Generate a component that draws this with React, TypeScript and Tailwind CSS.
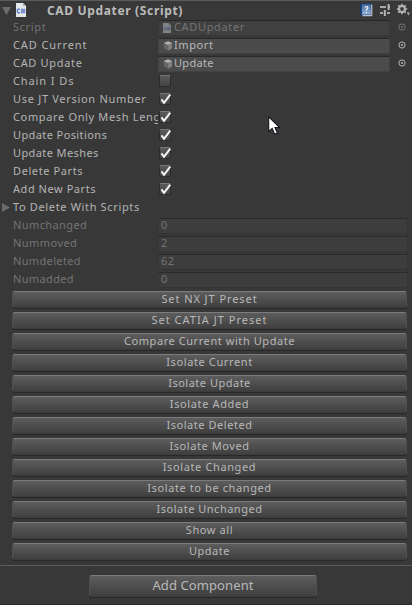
import React from "react";

const fontBase = "font-['Noto_Sans','DejaVu_Sans',sans-serif]";

type Spaced = { text: string; track: string };

function CsIcon({ dim }: { dim?: boolean }) {
  return (
    <svg
      viewBox="0 0 10 14"
      preserveAspectRatio="none"
      className={dim ? "h-[10px] w-[8px] shrink-0 opacity-40" : "h-[14px] w-[10px] shrink-0"}
    >
      <path d="M0 0H7L10 3V14H0Z" fill="#e4e7ea" />
      <path d="M7 0V3H10Z" fill="#a9adb1" />
      <path d="M4 6.4Q1.2 5.4 1.2 8Q1.2 10.6 4 9.6" fill="none" stroke="#4268c4" strokeWidth="1.1" />
      <path d="M6 5.5V10.5M8 5.5V10.5" stroke="#4268c4" strokeWidth="0.8" opacity="0.85" />
      <path d="M4.8 7H9.4M4.8 9H9.4" stroke="#4268c4" strokeWidth="0.9" />
    </svg>
  );
}

function Cube() {
  return (
    <svg viewBox="0 0 10 10" className="h-[10px] w-[10px] shrink-0">
      <path d="M5 .2L9.4 2.1L5 4.3L.6 2.1Z" fill="#b0b0b0" />
      <path d="M.6 2.5L4.8 4.6V9.8L1.2 7.6Z" fill="#686868" />
      <path d="M9.4 2.5L5.2 4.6V9.8L8.8 7.6Z" fill="#828282" />
    </svg>
  );
}

function Picker({ dim }: { dim?: boolean }) {
  return (
    <svg viewBox="0 0 8 8" className={dim ? "ml-[8px] h-2 w-2 opacity-50" : "ml-[8px] h-2 w-2"}>
      <circle cx="4" cy="4" r="3.1" fill="none" stroke="#b4b4b4" strokeWidth="1" />
      <rect x="3.2" y="3.2" width="1.6" height="1.6" fill="#c4c4c4" />
    </svg>
  );
}

function Label({ text, track, dim }: Spaced & { dim?: boolean }) {
  return (
    <div className={"w-[145px] shrink-0 overflow-hidden whitespace-nowrap " + track + (dim ? " text-[#747474]" : " text-[#b4b4b4]")}>
      {text}
    </div>
  );
}

function ObjectRow({ label, value, track, valueTrack, script }: { label: string; value: string; track: string; valueTrack: string; script?: boolean }) {
  return (
    <div className="flex h-[18px] items-center pl-[13px]">
      <Label text={label} track={track} dim={script} />
      <div
        className={
          "mt-px flex h-4 w-[232px] items-center border border-t-[#282828] pl-[4px] " +
          (script ? "border-[#383838] bg-[#404040] text-[#747474]" : "border-[#424242] bg-[#4b4b4b] text-[#b8b8b8]")
        }
      >
        {script ? <CsIcon dim /> : <Cube />}
        <span className={(script ? "mb-[2px] ml-[3px] " : "mb-[2px] ml-[1px] ") + valueTrack}>{value}</span>
      </div>
      <Picker dim={script} />
    </div>
  );
}

function ToggleRow({ text, track, on }: Spaced & { on?: boolean }) {
  return (
    <div className="flex h-[18px] items-center pl-[13px]">
      <Label text={text} track={track} />
      <div className="relative ml-[1px] h-[12px] w-[12px] rounded-[2px] border border-[#2b2b2b] border-t-[#777] bg-linear-to-b from-[#5a5a5a] to-[#434343]">
        {on && (
          <svg viewBox="0 0 13 13" className="absolute -left-px -top-px h-[13px] w-[13px]">
            <path d="M2.5 6.4L5 9.8L11.3 1.6" fill="none" stroke="#f4f4f4" strokeWidth="2" />
          </svg>
        )}
      </div>
    </div>
  );
}

function NumberRow({ text, track, value }: Spaced & { value: string }) {
  return (
    <div className="flex h-[18px] items-center pl-[13px]">
      <Label text={text} track={track} dim />
      <div className="mt-px flex h-4 w-[250px] items-center border border-[#353535] border-t-[#2a2a2a] bg-[#3d3d3d] pb-[2px] pl-[2px] tracking-[0.5px] text-[#747474]">
        {value}
      </div>
    </div>
  );
}

const toggles: (Spaced & { on?: boolean })[] = [
  { text: "Chain I Ds", track: "tracking-[0.9px]" },
  { text: "Use JT Version Number", track: "tracking-[0.7px]", on: true },
  { text: "Compare Only Mesh Length", track: "tracking-[0.65px]", on: true },
  { text: "Update Positions", track: "tracking-[0.4px]", on: true },
  { text: "Update Meshes", track: "tracking-[0.4px]", on: true },
  { text: "Delete Parts", track: "tracking-[0.6px]", on: true },
  { text: "Add New Parts", track: "tracking-[0.55px]", on: true },
];

const numbers: (Spaced & { value: string })[] = [
  { text: "Numchanged", track: "tracking-[0.4px]", value: "0" },
  { text: "Nummoved", track: "tracking-[0.45px]", value: "2" },
  { text: "Numdeleted", track: "tracking-[0.35px]", value: "62" },
  { text: "Numadded", track: "tracking-[0.35px]", value: "0" },
];

const actions: Spaced[] = [
  { text: "Set NX JT Preset", track: "tracking-[0.93px]" },
  { text: "Set CATIA JT Preset", track: "tracking-[1.03px]" },
  { text: "Compare Current with Update", track: "tracking-[0.57px]" },
  { text: "Isolate Current", track: "tracking-[0.63px]" },
  { text: "Isolate Update", track: "tracking-[0.5px]" },
  { text: "Isolate Added", track: "tracking-[0.63px]" },
  { text: "Isolate Deleted", track: "tracking-[0.55px]" },
  { text: "Isolate Moved", track: "tracking-[0.58px]" },
  { text: "Isolate Changed", track: "tracking-[0.62px]" },
  { text: "Isolate to be changed", track: "tracking-[0.6px]" },
  { text: "Isolate Unchanged", track: "tracking-[0.5px]" },
  { text: "Show all", track: "tracking-[0.6px]" },
  { text: "Update", track: "tracking-[0.5px]" },
];

const buttonSkin =
  "flex items-center justify-center rounded-[3px] border border-[#505050] border-t-[#7c7c7c] border-b-[#3c3c3c] bg-linear-to-b from-[#5d5d5d] to-[#404040] text-[#b8b8b8] shadow-[0_1px_0_#282828]";

export default function App() {
  return (
    <div className={"relative h-[605px] w-[412px] overflow-hidden bg-[#383838] text-[11px] leading-[16px] " + fontBase}>
      <header className="flex h-[18px] items-start border-t border-[#5c5c5c] pl-[2px]">
        <svg viewBox="0 0 9 8" className="mt-[6px] h-2 w-[9px]">
          <path d="M0 0H9L4.5 8Z" fill="#6b6b6b" />
        </svg>
        <div className="ml-[5px] mt-[2px]">
          <CsIcon />
        </div>
        <h1 className="ml-[21px] mt-[2px] w-[314px] whitespace-nowrap text-[12px] font-bold tracking-[0.66px] text-[#bcbcbc]">
          CAD Updater (Script)
        </h1>
        <svg viewBox="0 0 50 14" className="-ml-[1px] mt-[2px] h-[14px] w-[50px] shrink-0">
          <defs>
            <linearGradient id="book" x2="0" y2="1">
              <stop stopColor="#3f6499" />
              <stop offset="1" stopColor="#9ab8de" />
            </linearGradient>
          </defs>
          <path d="M0 1H3V13H1.5L0 11Z" fill="#173b70" />
          <rect x="1.5" y=".8" width="9.7" height="11.2" fill="url(#book)" stroke="#193c70" strokeWidth=".8" />
          <path d="M11.8 1.5V12.7H2.5" fill="none" stroke="#d7dfe8" strokeWidth="1" />
          <path d="M5 4.7Q5.2 3.4 6.6 3.5Q8.3 3.7 7.6 5.4L6.4 6.7V7.8M6.4 9V10" fill="none" stroke="#fff" strokeWidth="1.1" />
          <path d="M20 4H26M29 4H30M20 10H23M27 10H30" stroke="#a8a8a8" strokeWidth="1.8" />
          <path d="M28.6 1V7M24.8 7V13" stroke="#b6b6b6" strokeWidth="2" />
          <g transform="translate(42 6)" stroke="#b4b4b4" fill="none">
            <circle r="2.9" strokeWidth="2" />
            <path d="M0-5.2V-3M0 3V5.2M-5.2 0H-3M3 0H5.2M-3.7-3.7L-2.3-2.3M2.3 2.3L3.7 3.7M-3.7 3.7L-2.3 2.3M2.3-2.3L3.7-3.7" strokeWidth="1.7" />
          </g>
          <path d="M46.8 9.5H49.8L48.3 12.5Z" fill="#b4b4b4" />
        </svg>
      </header>

      <ObjectRow label="Script" value="CADUpdater" track="tracking-[0.65px]" valueTrack="tracking-[0.65px]" script />
      <ObjectRow label="CAD Current" value="Import" track="tracking-[0.9px]" valueTrack="tracking-[0.6px]" />
      <ObjectRow label="CAD Update" value="Update" track="tracking-[0.68px]" valueTrack="tracking-[0.3px]" />
      {toggles.map((t) => (
        <ToggleRow key={t.text} {...t} />
      ))}
      <div className="flex h-[18px] items-center pl-[2px]">
        <svg viewBox="0 0 8 9" className="h-[9px] w-2">
          <path d="M0 0L8 4.5L0 9Z" fill="#6b6b6b" />
        </svg>
        <span className="ml-[3px] tracking-[0.65px] text-[#b4b4b4]">To Delete With Scripts</span>
      </div>
      {numbers.map((n) => (
        <NumberRow key={n.text} {...n} />
      ))}

      <div className="mt-[3px] flex flex-col gap-[4px] pl-[12px] pr-[5px]">
        {actions.map((a) => (
          <button key={a.text} className={"h-[17px] w-full pb-[2px] leading-[15px] " + buttonSkin + " " + a.track}>
            {a.text}
          </button>
        ))}
      </div>
      <div className="mt-[5px] h-px bg-[#5c5c5c]" />
      <button className={"ml-[89px] mt-[9px] h-[22px] w-[228px] pb-[3px] text-[13px] tracking-[0.1px] " + buttonSkin}>Add Component</button>
      <div className="mt-[7px] h-px bg-[#282828]" />

      <svg viewBox="0 0 13 20" className="absolute left-[268px] top-[116px] h-5 w-[13px]">
        <path d="M.7 .8V15.5L4.2 12.4L6.6 18.3L9.4 17.1L7 11.5H11.7Z" fill="#fff" stroke="#16161f" strokeWidth="1.1" />
      </svg>
    </div>
  );
}
